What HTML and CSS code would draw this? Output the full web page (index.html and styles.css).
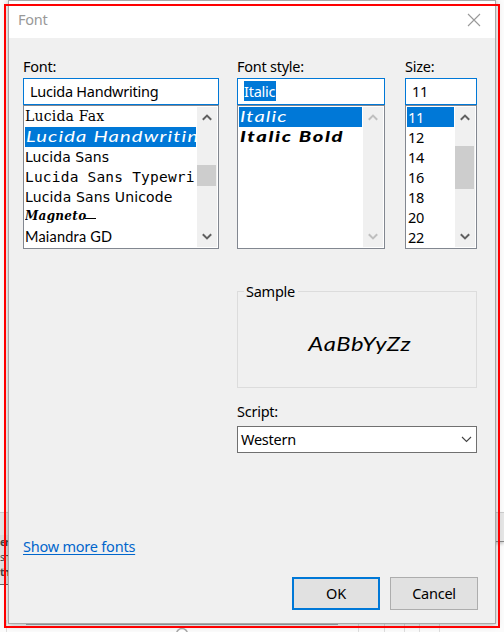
FILE: index.html
```html
<!DOCTYPE html>
<html lang="en">
<head>
<meta charset="utf-8">
<title>Font</title>
<link rel="stylesheet" href="styles.css">
</head>
<body>
<div class="behind" aria-hidden="true">
  <div class="ribbon"></div>
  <div class="snippet"><span>er</span><span class="light">sh</span><span>th</span></div>
  <svg class="foot" width="504" height="12" viewBox="0 0 504 12"><path d="M6.500 0V12M358.500 0V12M384.500 0V12M404.500 0V12M419.500 0V12M439.500 0V12" stroke="#ddd" fill="none"/><path d="M26 4.500H338" stroke="#a5acb3"/><circle cx="182" cy="14" r="5.500" fill="#fff" stroke="#aaa" stroke-width="1.500"/></svg>
</div>
<div class="dialog">
  <header class="titlebar"><span>Font</span>
    <svg width="14" height="14" viewBox="0 0 14 14"><path d="M1 1L13 13M13 1L1 13" stroke="#999" stroke-width="1.100"/></svg>
  </header>
  <main class="content">
    <div class="pickers">
      <section class="picker family">
        <label>Font:</label>
        <div class="field">Lucida Handwriting</div>
        <div class="list">
          <div class="items">
            <div class="item fax"><span>Lucida Fax</span></div>
            <div class="item hand selected"><span>Lucida Handwritin</span></div>
            <div class="item lsans"><span>Lucida Sans</span></div>
            <div class="item mono"><span>Lucida Sans Typewri</span></div>
            <div class="item unicode"><span>Lucida Sans Unicode</span></div>
            <div class="item magneto"><span>Magneto</span></div>
            <div class="item maiandra"><span>Maiandra GD</span></div>
          </div>
          <div class="scroll">
            <svg width="10" height="7" viewBox="0 0 10 7"><path d="M.8 5.800L5 1.600L9.200 5.800"/></svg>
            <i class="thumb"></i>
            <svg width="10" height="7" viewBox="0 0 10 7"><path d="M.8 1.200L5 5.400L9.200 1.200"/></svg>
          </div>
        </div>
      </section>
      <section class="picker style">
        <label>Font style:</label>
        <div class="field"><mark>Italic</mark></div>
        <div class="list">
          <div class="items">
            <div class="item hand selected"><span>Italic</span></div>
            <div class="item hand bold"><span>Italic Bold</span></div>
          </div>
          <div class="scroll disabled">
            <svg width="10" height="7" viewBox="0 0 10 7"><path d="M.8 5.800L5 1.600L9.200 5.800"/></svg>
            <svg width="10" height="7" viewBox="0 0 10 7"><path d="M.8 1.200L5 5.400L9.200 1.200"/></svg>
          </div>
        </div>
      </section>
      <section class="picker size">
        <label>Size:</label>
        <div class="field">11</div>
        <div class="list">
          <div class="items">
            <div class="item selected">11</div><div class="item">12</div><div class="item">14</div><div class="item">16</div><div class="item">18</div><div class="item">20</div><div class="item">22</div>
          </div>
          <div class="scroll">
            <svg width="10" height="7" viewBox="0 0 10 7"><path d="M.8 5.800L5 1.600L9.200 5.800"/></svg>
            <i class="thumb"></i>
            <svg width="10" height="7" viewBox="0 0 10 7"><path d="M.8 1.200L5 5.400L9.200 1.200"/></svg>
          </div>
        </div>
      </section>
    </div>
    <div class="details">
      <div class="sample"><span class="legend">Sample</span><span class="preview">AaBbYyZz</span></div>
      <label class="script-label">Script:</label>
      <div class="combo"><span>Western</span><svg width="11" height="7" viewBox="0 0 11 7"><path d="M1 1L5.500 5.500L10 1" fill="none" stroke="#444" stroke-width="1.100"/></svg></div>
    </div>
    <a class="more">Show more fonts</a>
    <div class="actions"><button class="ok">OK</button><button>Cancel</button></div>
  </main>
</div>
<div class="outline"></div>
</body>
</html>
```
FILE: styles.css
```css
* { box-sizing: border-box; }
body {
  margin: 0;
  width: 504px;
  height: 632px;
  position: relative;
  overflow: hidden;
  background: #fbfbfb;
  font: 14.5px/20px "Noto Sans", "Open Sans", sans-serif;
  letter-spacing: -0.25px;
  color: #000;
}

/* Window underneath the dialog */
.behind { position: absolute; inset: 0; }
.ribbon {
  position: absolute;
  top: 512px;
  width: 100%;
  height: 30px;
  background: #e5e5e5;
  border-top: 1px solid #ccc;
  border-bottom: 1px solid #888;
  box-shadow: 0 2px 3px #ccc;
}
.snippet {
  position: absolute;
  top: 535px;
  left: 0;
  width: 9px;
  height: 50px;
  background: linear-gradient(#ddd, #e4e4e4);
  border-bottom: 1px solid #666;
  font-size: 10px;
  line-height: 15px;
  letter-spacing: -1px;
  font-weight: 700;
  color: #444;
}
.snippet span { display: block; }
.snippet .light { font-weight: 400; }
.foot { position: absolute; left: 0; bottom: 0; }

.dialog {
  position: absolute;
  left: 8px;
  top: 0;
  width: 488px;
  height: 624px;
  border: 1px solid #a9a9a9;
  background: #f0f0f0;
  box-shadow: 0 1px 6px rgba(0, 0, 0, .3);
}
.titlebar {
  height: 37px;
  padding: 0 14px 0 9px;
  display: flex;
  align-items: center;
  justify-content: space-between;
  background: #fff;
  color: #999;
}
.titlebar span { padding-bottom: 1px; }
.outline {
  position: absolute;
  left: 4px;
  top: 4px;
  width: 496px;
  height: 624px;
  border: 2px solid #f00;
}
.content { padding: 18px 18px 0 14px; }
.pickers { display: flex; }
.family { width: 196px; }
.style { width: 148px; margin: 0 20px 0 18px; }
.size { width: 72px; }
label { display: block; height: 22px; line-height: 20px; }
.field {
  height: 27px;
  padding-left: 6px;
  border: 1px solid #0078d7;
  background: #fff;
  line-height: 25px;
}
mark { display: inline-block; line-height: 20px; padding-right: 1px; color: #fff; background: #0078d7; }
.list {
  display: flex;
  height: 144px;
  padding: 1px;
  border: 1px solid #828790;
  background: #fff;
}
.items { flex: 1; min-width: 0; overflow: hidden; margin-right: 1px; }
.item { height: 20px; line-height: 20px; white-space: nowrap; overflow: hidden; }
.size .item { padding-left: 1px; }
.item span { display: inline-block; }
.selected { background: #0078d7; color: #fff; }
.fax { font: 14px/19px "DejaVu Serif", serif; letter-spacing: .2px; }
.hand { font: italic 15.5px/18px Lato, cursive; letter-spacing: .9px; padding-left: 1px; }
.hand span { transform: scaleX(1.3); transform-origin: left; }
.bold { font-weight: 900; letter-spacing: 1.3px; }
.lsans { font: 14px/20px "DejaVu Sans", sans-serif; letter-spacing: .05px; }
.mono { font: 14.5px/20px "DejaVu Sans Mono", monospace; letter-spacing: .2px; }
.unicode { font: 14px/21px "DejaVu Sans", sans-serif; letter-spacing: .15px; }
.magneto { font: italic 700 12px/19px "DejaVu Serif", serif; letter-spacing: .3px; }
.magneto span { background: linear-gradient(#000, #000) 100% 11px / 11px 1px no-repeat; padding-right: 10px; }
.maiandra { font: 14.500px/20px Lato, sans-serif; letter-spacing: .2px; }
.scroll {
  flex: none;
  width: 20px;
  display: flex;
  flex-direction: column;
  align-items: center;
  justify-content: space-between;
  padding: 7px 0;
  background: #f0f0f0;
}
.scroll svg { fill: none; stroke: #606060; stroke-width: 2; margin-right: 1px; }
.disabled svg { stroke: #bfbfbf; }
.thumb { width: 19px; height: 21px; margin-top: 44px; margin-bottom: auto; align-self: flex-start; background: #cdcdcd; }
.size .thumb { height: 43px; margin-top: 25px; }

.details { margin: 42px 0 0 214px; }
.sample {
  position: relative;
  height: 97px;
  border: 1px solid #dcdcdc;
  display: flex;
  align-items: center;
  justify-content: center;
}
.legend { position: absolute; left: 6px; top: -11px; padding: 0 3px 0 2px; background: #f0f0f0; }
.preview { font: italic 19px/24px Lato, cursive; letter-spacing: .5px; padding: 8px 0 0 5px; transform: scaleX(1.25); }
.script-label { margin-top: 13px; height: 25px; }
.combo {
  height: 27px;
  border: 1px solid #707070;
  padding: 0 4px 1px 3px;
  display: flex;
  align-items: center;
  justify-content: space-between;
  background: #fff;
}
.more { display: block; width: max-content; margin-top: 83px; color: #0066cc; text-decoration: underline; text-underline-offset: 2px; letter-spacing: -.22px; }
.actions { display: flex; justify-content: flex-end; gap: 10px; margin-top: 21px; margin-right: -1px; }
button {
  width: 88px;
  height: 33px;
  padding: 0 0 2px;
  border: 1px solid #adadad;
  background: #e1e1e1;
  font: inherit;
  letter-spacing: inherit;
}
.ok { border: 2px solid #0078d7; }
```
